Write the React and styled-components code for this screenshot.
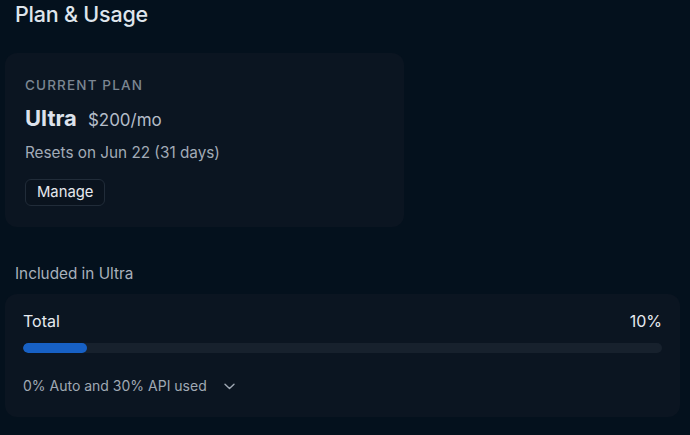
import styled, { createGlobalStyle } from "styled-components";

const GlobalStyle = createGlobalStyle`
  html, body {
    margin: 0;
    padding: 0;
    background: #04111d;
  }
  body {
    font-family: Inter, "Noto Sans", "Liberation Sans", sans-serif;
    -webkit-font-smoothing: antialiased;
  }
  * {
    box-sizing: border-box;
  }
`;

const usage = {
  plan: "Ultra",
  price: "$200/mo",
  resets: "Resets on Jun 22 (31 days)",
  total: 10,
  detail: "0% Auto and 30% API used",
};

function Chevron() {
  return (
    <svg width="11" height="7" viewBox="0 0 11 7" fill="none">
      <path
        d="M1 1.2 5.5 5.5 10 1.2"
        stroke="#a0a9b4"
        strokeWidth="1.4"
        strokeLinecap="round"
        strokeLinejoin="round"
      />
    </svg>
  );
}

export default function App() {
  return (
    <>
      <GlobalStyle />
      <Page>
        <Title>Plan &amp; Usage</Title>

        <PlanCard>
          <Eyebrow>Current Plan</Eyebrow>
          <PlanRow>
            <PlanName>{usage.plan}</PlanName>
            <Price>{usage.price}</Price>
          </PlanRow>
          <Resets>{usage.resets}</Resets>
          <ManageButton type="button">Manage</ManageButton>
        </PlanCard>

        <SectionLabel>Included in {usage.plan}</SectionLabel>

        <UsageCard>
          <UsageHeader>
            <span>Total</span>
            <span>{usage.total}%</span>
          </UsageHeader>
          <Track>
            <Fill style={{ width: `${usage.total}%` }} />
          </Track>
          <Detail type="button">
            <span>{usage.detail}</span>
            <Chevron />
          </Detail>
        </UsageCard>
      </Page>
    </>
  );
}

const Page = styled.main`
  display: flex;
  flex-direction: column;
  align-items: flex-start;
  padding: 0 10px 0 5px;
  width: 690px;
  height: 435px;
  overflow: hidden;
`;

const Title = styled.h1`
  margin: 0 0 0 10px;
  font-size: 21.5px;
  line-height: 28px;
  font-weight: 500;
  color: #dfe5ec;
  letter-spacing: -0.01em;
`;

const PlanCard = styled.section`
  margin-top: 25px;
  width: 399px;
  height: 174px;
  padding: 24px 20px 21px;
  border-radius: 12px;
  background: #0b1521;
  display: flex;
  flex-direction: column;
  align-items: flex-start;
`;

const Eyebrow = styled.div`
  font-size: 13.5px;
  line-height: 16px;
  font-weight: 500;
  letter-spacing: 0.085em;
  text-transform: uppercase;
  color: #7b8692;
`;

const PlanRow = styled.div`
  margin-top: 11px;
  display: flex;
  align-items: baseline;
  gap: 11px;
`;

const PlanName = styled.span`
  font-size: 22px;
  line-height: 28px;
  font-weight: 700;
  color: #dde2ec;
`;

const Price = styled.span`
  font-size: 17px;
  color: #b4bcc8;
`;

const Resets = styled.div`
  margin-top: 11px;
  font-size: 15.3px;
  line-height: 20px;
  color: #a2abb7;
`;

const ManageButton = styled.button`
  margin-top: 16px;
  height: 27px;
  padding: 0 11px;
  border: 1px solid #212c39;
  border-radius: 6px;
  background: #0a131e;
  font-family: inherit;
  font-size: 14.8px;
  line-height: 17px;
  color: #e6e9ee;
`;

const SectionLabel = styled.div`
  margin: 37px 0 0 10px;
  font-size: 15.3px;
  line-height: 20px;
  color: #a8b0bb;
`;

const UsageCard = styled.section`
  margin-top: 10px;
  width: 675px;
  height: 123px;
  padding: 17px 18px 0;
  border-radius: 12px;
  background: #0b1521;
  display: flex;
  flex-direction: column;
`;

const UsageHeader = styled.div`
  display: flex;
  justify-content: space-between;
  font-size: 16px;
  line-height: 20px;
  color: #e6eaf0;
`;

const Track = styled.div`
  margin-top: 12px;
  height: 10px;
  border-radius: 5px;
  background: #17212d;
  overflow: hidden;
`;

const Fill = styled.div`
  height: 100%;
  border-radius: 5px;
  background: #1760c4;
`;

const Detail = styled.button`
  margin-top: 23px;
  align-self: flex-start;
  display: flex;
  align-items: center;
  gap: 17px;
  padding: 0;
  border: 0;
  background: none;
  font-family: inherit;
  font-size: 14px;
  line-height: 20px;
  color: #a0a9b4;
`;
